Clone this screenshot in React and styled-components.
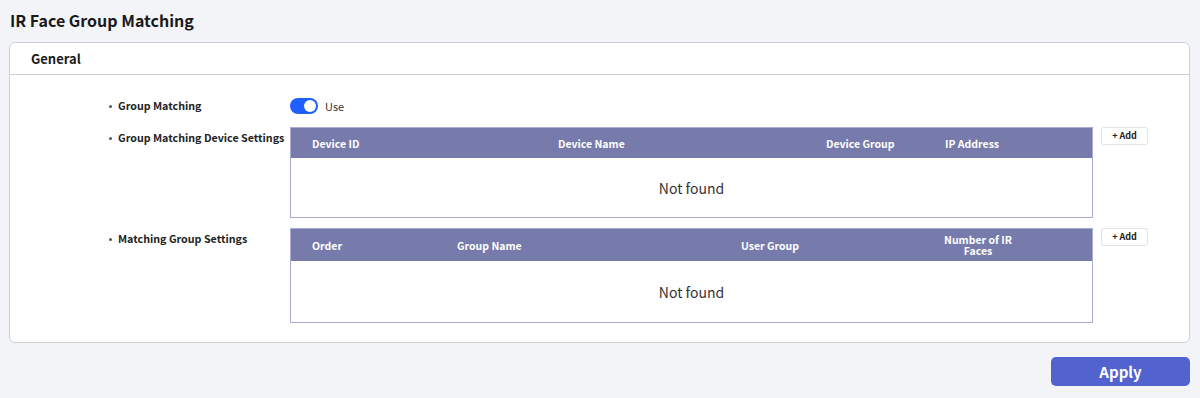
import React from 'react';
import styled, { createGlobalStyle } from 'styled-components';

const font = '"Noto Sans CJK KR", "Noto Sans", sans-serif';

const GlobalStyle = createGlobalStyle`
  html, body {
    margin: 0;
    padding: 0;
    background: #f3f4f8;
    font-family: ${font};
    color: #222;
  }
`;

const Page = styled.div`
  padding: 0 10px 0 9px;
`;

const Title = styled.h1`
  margin: 0;
  padding: 8px 0 10px 1px;
  font-size: 16px;
  line-height: 24px;
  font-weight: 700;
  color: #1a1a1a;
`;

const Panel = styled.section`
  background: #fff;
  border: 1px solid #cfd0d4;
  border-radius: 6px;
  height: 301px;
  box-sizing: border-box;
`;

const PanelHeader = styled.div`
  height: 31px;
  border-bottom: 1px solid #cfd0d4;
  padding-left: 21px;
  display: flex;
  align-items: center;
  font-size: 13px;
  font-weight: 700;
  color: #1a1a1a;
`;

const PanelBody = styled.div`
  padding: 23px 0 0 96px;
  display: flex;
  flex-direction: column;
  gap: ${p => p.$gap || 12}px;
`;

const Row = styled.div`
  display: grid;
  grid-template-columns: 184px auto;
  align-items: ${p => (p.$center ? 'center' : 'start')};
  margin-top: ${p => p.$mt || 0}px;
`;

const Label = styled.div`
  font-size: 10.7px;
  font-weight: 700;
  line-height: ${p => p.$lh || 22}px;
  color: #222;
  padding-left: 12px;
  position: relative;
  &::before {
    content: '';
    position: absolute;
    left: 3px;
    top: ${p => (p.$lh || 22) / 2 - 1}px;
    width: 3px;
    height: 3px;
    border-radius: 50%;
    background: #555;
  }
`;

const ToggleWrap = styled.label`
  display: flex;
  align-items: center;
  gap: 7px;
  height: 16px;
  font-size: 11px;
  line-height: 16px;
  color: #333;
`;

const Switch = styled.span`
  width: 28px;
  height: 16px;
  border-radius: 8px;
  background: #1f5eff;
  position: relative;
  &::after {
    content: '';
    position: absolute;
    right: 2px;
    top: 2px;
    width: 12px;
    height: 12px;
    border-radius: 50%;
    background: #fff;
  }
`;

const Control = styled.div`
  display: flex;
  align-items: flex-start;
  gap: 8px;
`;

const Table = styled.div`
  width: 803px;
  border: 1px solid #a9acd2;
  box-sizing: border-box;
  background: #fff;
`;

const HeadRow = styled.div`
  display: grid;
  grid-template-columns: ${p => p.$cols};
  height: ${p => p.$h}px;
  background: #777bab;
  align-items: center;
`;

const HeadCell = styled.div`
  font-size: 10.5px;
  font-weight: 700;
  color: #fff;
  line-height: 11px;
  padding-left: ${p => (p.$center ? 0 : 21)}px;
  text-align: ${p => (p.$center ? 'center' : 'left')};
`;

const Empty = styled.div`
  height: ${p => p.$h}px;
  display: flex;
  align-items: center;
  justify-content: center;
  font-size: 14px;
  color: #333;
`;

const AddButton = styled.button`
  width: 47px;
  height: 18px;
  padding: 0;
  border: 1px solid #e2e3e6;
  border-radius: 3px;
  background: #fff;
  font-family: ${font};
  font-size: 9px;
  font-weight: 700;
  color: #222;
  line-height: 16px;
  cursor: pointer;
`;

const Footer = styled.div`
  display: flex;
  justify-content: flex-end;
  padding-top: 14px;
`;

const ApplyButton = styled.button`
  width: 139px;
  height: 29px;
  border: none;
  border-radius: 5px;
  background: #5262cf;
  color: #fff;
  font-family: ${font};
  font-size: 15px;
  font-weight: 700;
  cursor: pointer;
`;

const deviceHead = ['Device ID', 'Device Name', 'Device Group', 'IP Address'];

export default function App() {
  return (
    <Page>
      <GlobalStyle />
      <Title>IR Face Group Matching</Title>
      <Panel>
        <PanelHeader>General</PanelHeader>
        <PanelBody $gap={13}>
          <Row $center>
            <Label $lh={16}>Group Matching</Label>
            <ToggleWrap>
              <Switch />
              Use
            </ToggleWrap>
          </Row>
          <Row>
            <Label>Group Matching Device Settings</Label>
            <Control>
              <Table>
                <HeadRow $cols="246px 268px 119px 1fr" $h={30}>
                  {deviceHead.map(h => (
                    <HeadCell key={h}>{h}</HeadCell>
                  ))}
                </HeadRow>
                <Empty $h={59}>Not found</Empty>
              </Table>
              <AddButton>+ Add</AddButton>
            </Control>
          </Row>
          <Row $mt={-3}>
            <Label>Matching Group Settings</Label>
            <Control>
              <Table>
                <HeadRow $cols="145px 284px 210px 96px 1fr" $h={32}>
                  <HeadCell>Order</HeadCell>
                  <HeadCell>Group Name</HeadCell>
                  <HeadCell>User Group</HeadCell>
                  <HeadCell $center>Number of IR Faces</HeadCell>
                  <span />
                </HeadRow>
                <Empty $h={61}>Not found</Empty>
              </Table>
              <AddButton>+ Add</AddButton>
            </Control>
          </Row>
        </PanelBody>
      </Panel>
      <Footer>
        <ApplyButton>Apply</ApplyButton>
      </Footer>
    </Page>
  );
}
